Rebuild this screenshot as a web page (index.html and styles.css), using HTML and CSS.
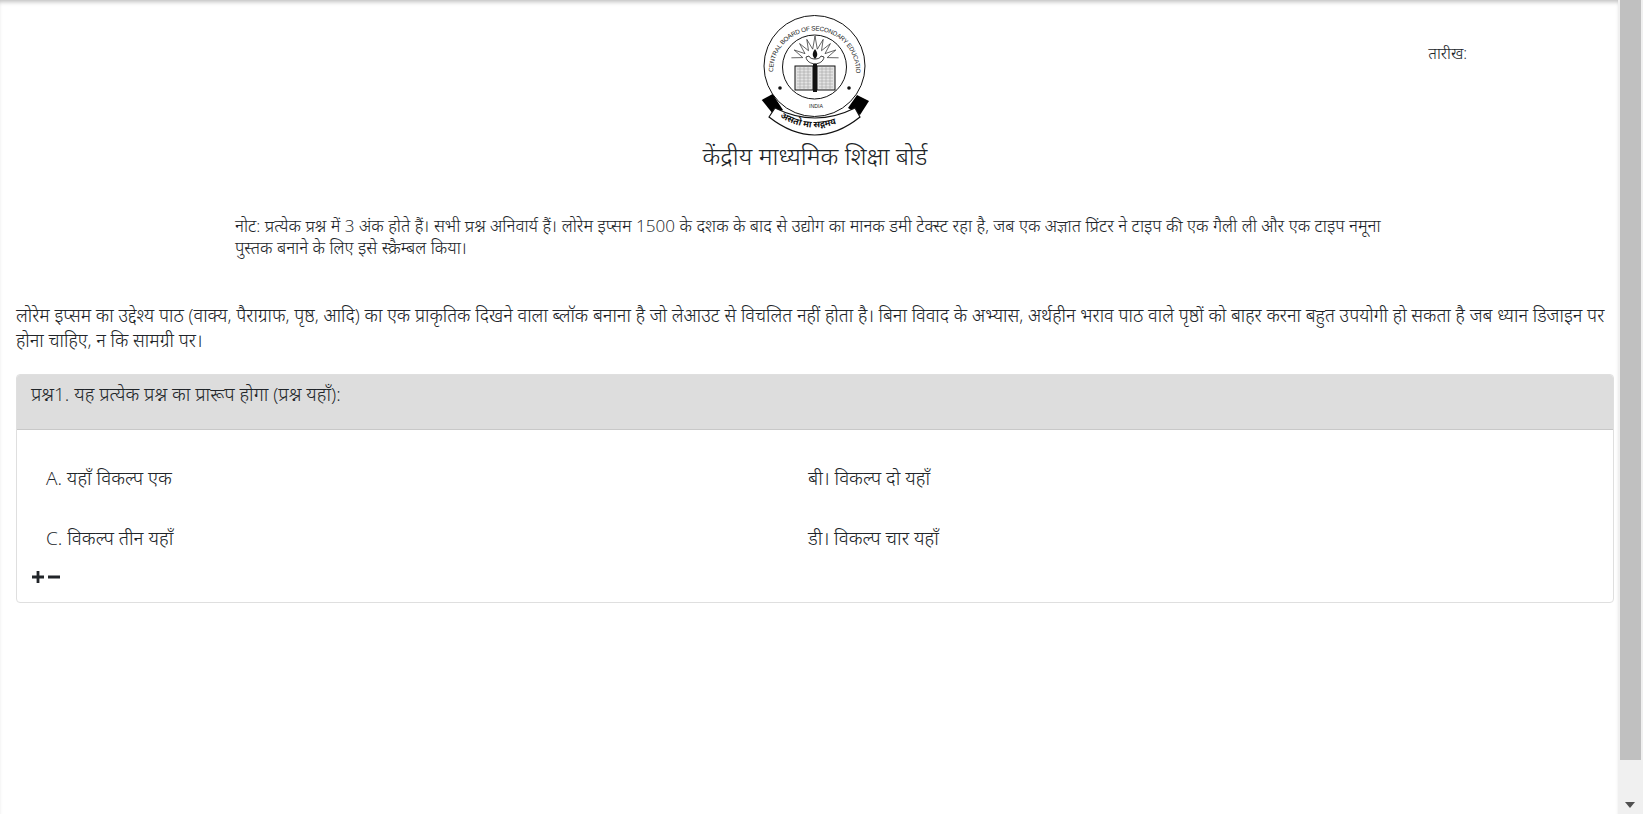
FILE: index.html
```html
<!DOCTYPE html>
<html lang="hi">
<head>
<meta charset="utf-8">
<title>केंद्रीय माध्यमिक शिक्षा बोर्ड</title>
<link rel="stylesheet" href="styles.css">
</head>
<body>
<div class="page">
  <main class="content">
    <header class="head">
      <div class="head-side"></div>
      <div class="head-center">
        <svg class="logo" viewBox="0 0 110 122" width="110" height="122" aria-label="CBSE logo">
          <defs>
            <path id="ringText" d="M 13 58 A 41.500 41.500 0 1 1 96 58"/>
            <path id="mottoText" d="M 18 102 Q 55 125 92 102"/>
          </defs>
          <circle cx="54.500" cy="52" r="50.500" fill="#fff" stroke="#111" stroke-width="1"/>
          <circle cx="54.500" cy="53" r="32" fill="#fff" stroke="#111" stroke-width="1"/>
          <text class="ring-text"><textPath href="#ringText" textLength="136" lengthAdjust="spacing">CENTRAL BOARD OF SECONDARY EDUCATION</textPath></text>
          <path class="rays" d="M31.400 43.800L42.800 43.600 34.200 36 45 39.600 39.600 29.600 48.500 36.700 46.800 25.400 52.700 35.200 55 22 57.300 35.200 63.200 25.400 61.500 36.700 70.400 29.600 65 39.600 75.800 36 67.200 43.600 78.600 43.800"/>
          <path class="lamp" d="M46 43c1 9 17 9 18 0l-3-1c-1 4-11 4-12 0z"/>
          <path d="M55 35c-3 4-3 7 0 10 3-3 3-6 0-10z" fill="#111"/>
          <rect class="page-fill" x="35" y="52" width="18" height="24"/>
          <rect class="page-fill" x="57" y="52" width="18" height="24"/>
          <rect x="53" y="50" width="4" height="28" fill="#111"/>
          <path class="page-lines" d="M37 55h14M37 58h14M37 61h14M37 64h14M37 67h14M37 70h14M37 73h14M59 55h14M59 58h14M59 61h14M59 64h14M59 67h14M59 70h14M59 73h14M40 53v22M44 53v22M48 53v22M62 53v22M66 53v22M70 53v22"/>
          <circle cx="20" cy="74" r="1.800" fill="#111"/>
          <circle cx="89" cy="74" r="1.800" fill="#111"/>
          <text x="56" y="94" class="india">INDIA</text>
          <path d="M1.700 86L12.700 80 23 96 13 100z" fill="#000"/>
          <path d="M109 87L97 81 88 94 100 101z" fill="#000"/>
          <path d="M15 94Q55 114 95 94L100 103Q55 139 9 103z" fill="#fff" stroke="#111" stroke-width="1.200"/>
          <text class="motto"><textPath href="#mottoText" startOffset="2">असतो मा सद्गमय</textPath></text>
        </svg>
        <h1 class="board">केंद्रीय माध्यमिक शिक्षा बोर्ड</h1>
      </div>
      <div class="head-side date">तारीख:</div>
    </header>

    <p class="note">नोट: प्रत्येक प्रश्न में 3 अंक होते हैं। सभी प्रश्न अनिवार्य हैं। लोरेम इप्सम 1500 के दशक के बाद से उद्योग का मानक डमी टेक्स्ट रहा है, जब एक अज्ञात प्रिंटर ने टाइप की एक गैली ली और एक टाइप नमूना पुस्तक बनाने के लिए इसे स्क्रैम्बल किया।</p>

    <p class="intro">लोरेम इप्सम का उद्देश्य पाठ (वाक्य, पैराग्राफ, पृष्ठ, आदि) का एक प्राकृतिक दिखने वाला ब्लॉक बनाना है जो लेआउट से विचलित नहीं होता है। बिना विवाद के अभ्यास, अर्थहीन भराव पाठ वाले पृष्ठों को बाहर करना बहुत उपयोगी हो सकता है जब ध्यान डिजाइन पर होना चाहिए, न कि सामग्री पर।</p>

    <section class="card">
      <div class="card-head">प्रश्न1. यह प्रत्येक प्रश्न का प्रारूप होगा (प्रश्न यहाँ):</div>
      <div class="card-body">
        <div class="options">
          <div>A. यहाँ विकल्प एक</div>
          <div>बी। विकल्प दो यहाँ</div>
          <div>C. विकल्प तीन यहाँ</div>
          <div>डी। विकल्प चार यहाँ</div>
        </div>
        <div class="tools">
          <svg viewBox="0 0 14 14" width="14" height="14" aria-label="plus"><path d="M5.600 1h2.800v4.600H13v2.800H8.400V13H5.600V8.400H1V5.600h4.600z"/></svg>
          <svg viewBox="0 0 14 14" width="14" height="14" aria-label="minus"><path d="M1 5.600h12v2.800H1z"/></svg>
        </div>
      </div>
    </section>
  </main>
  <div class="scrollbar" aria-hidden="true">
    <div class="thumb"></div>
    <div class="arrow"></div>
  </div>
</div>
</body>
</html>
```
FILE: styles.css
```css
* { box-sizing: border-box; }
html, body { margin: 0; height: 100%; overflow: hidden; background: #fff; }
body {
  font-family: "Open Sans", "Noto Sans", "Noto Sans Devanagari", "Liberation Sans", sans-serif;
  font-size: 16px;
  line-height: 24px;
  font-weight: 300;
  color: #212529;
}
.page { display: flex; height: 814px; }
.content {
  flex: 1;
  min-width: 0;
  padding: 14px 4px 0 16px;
  box-shadow: inset 0 4px 4px -2px rgba(0,0,0,.25);
}
.head { display: grid; grid-template-columns: 1fr 1fr 1fr; }
.head-center { display: flex; flex-direction: column; align-items: center; }
.logo { display: block; overflow: visible; }
.ring-text { font: 6.300px "Liberation Sans", sans-serif; fill: #222; }
.rays { fill: #fff; stroke: #222; stroke-width: .7; stroke-linejoin: miter; }
.lamp { fill: #fff; stroke: #111; stroke-width: .8; }
.page-fill { fill: #e4e4e4; stroke: #111; stroke-width: 1; }
.page-lines { stroke: #999; stroke-width: .5; fill: none; }
.india { font: 5.200px "Liberation Sans", sans-serif; fill: #222; text-anchor: middle; }
.motto { font: bold 9px "Open Sans", "Noto Sans", sans-serif; fill: #111; }
.board { margin: 5px 0 0; font-size: 24.500px; line-height: 29px; font-weight: 300; white-space: nowrap; }
.date { padding: 27px 0 0 347px; font-size: 16px; }
.note { margin: 45px 0 0 219px; width: 1180px; font-size: 17.100px; line-height: 22px; }
.intro { margin: 43px 0 0; width: 1598px; font-size: 18.350px; line-height: 25px; }
.card {
  margin: 22px 0 0;
  border: 1px solid #dfdfdf;
  border-radius: 4px;
  overflow: hidden;
  width: 1598px;
  font-size: 19px;
}
.card-head {
  height: 55px;
  padding: 7px 14px;
  background: #dddddd;
  border-bottom: 1px solid #c8c8c8;
  font-size: 18.900px;
}
.card-body { padding: 36px 14px 13px; }
.options {
  display: grid;
  grid-template-columns: 762px 1fr;
  row-gap: 36px;
  padding-left: 15px;
}
.tools { display: flex; margin-top: 15px; height: 24px; align-items: center; gap: 2px; }
.tools svg { fill: #212529; display: block; }
.scrollbar {
  width: 25px;
  background: #f0f0f0;
  display: flex;
  flex-direction: column;
  align-items: center;
  position: relative;
}
.thumb { width: 21px; height: 760px; background: #c0c0c0; }
.arrow {
  position: absolute;
  left: 7px;
  bottom: 6px;
  width: 0;
  height: 0;
  border-left: 5.500px solid transparent;
  border-right: 5.500px solid transparent;
  border-top: 6px solid #505050;
}
```
